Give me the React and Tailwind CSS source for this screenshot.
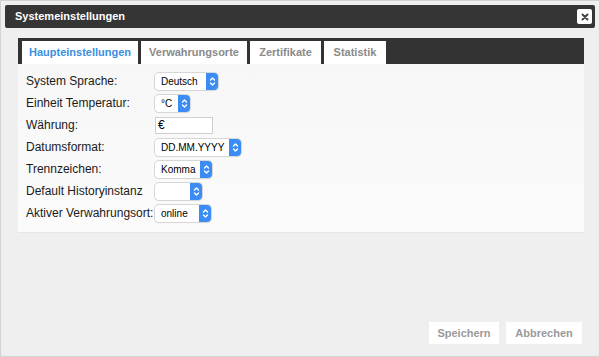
import React from 'react'

function Chevrons() {
  return (
    <svg width="7" height="11" viewBox="0 0 7 11" fill="none" stroke="white" strokeWidth="1.4" strokeLinecap="round" strokeLinejoin="round">
      <path d="M1.5 4 L3.5 2 L5.5 4" />
      <path d="M1.5 7 L3.5 9 L5.5 7" />
    </svg>
  )
}

function Select({ value, w }) {
  return (
    <div className={`flex h-[17px] items-stretch rounded-[4px] bg-white shadow-[0_0_0_1px_#d6d6d6,0_1px_1px_rgba(0,0,0,0.12)] ${w}`}>
      <span className="flex flex-1 items-center whitespace-nowrap pl-[6px] text-[10px] text-black">{value}</span>
      <span className="flex w-[12px] shrink-0 items-center justify-center rounded-r-[4px] bg-[#3b8cf5]">
        <Chevrons />
      </span>
    </div>
  )
}

const rows = [
  { label: 'System Sprache:', el: <Select value="Deutsch" w="w-[63px]" /> },
  { label: 'Einheit Temperatur:', el: <Select value="°C" w="w-[35px]" /> },
  {
    label: 'Währung:',
    el: (
      <div className="flex h-[17px] w-[58px] items-center border border-[#cfcfcf] bg-white pl-[2px] text-[12px] text-black">€</div>
    ),
  },
  { label: 'Datumsformat:', el: <Select value="DD.MM.YYYY" w="w-[86px]" /> },
  { label: 'Trennzeichen:', el: <Select value="Komma" w="w-[57px]" /> },
  { label: 'Default Historyinstanz', el: <Select value="" w="w-[47px]" /> },
  { label: 'Aktiver Verwahrungsort:', el: <Select value="online" w="w-[56px]" /> },
]

const tabs = [
  { name: 'Haupteinstellungen', w: 'w-[116px]', active: true },
  { name: 'Verwahrungsorte', w: 'w-[106px]' },
  { name: 'Zertifikate', w: 'w-[71px]' },
  { name: 'Statistik', w: 'w-[62px]' },
]

export default function App() {
  return (
    <div
      className="flex h-[357px] w-[600px] flex-col border border-[#d2d2d2] bg-[#efefef] p-[4px] text-[#111]"
      style={{ fontFamily: '"Liberation Sans", Arial, sans-serif' }}
    >
      {/* title bar */}
      <div className="flex h-[23px] items-center justify-between rounded-[2px] bg-[#353535] pl-[10px] pr-[3px]">
        <span className="text-[11px] font-bold text-white">Systemeinstellungen</span>
        <span className="flex h-[15px] w-[15px] items-center justify-center rounded-[2px] bg-white">
          <svg width="8" height="8" viewBox="0 0 8 8" stroke="#444" strokeWidth="2" strokeLinecap="round">
            <path d="M1.5 1.5 L6.5 6.5 M6.5 1.5 L1.5 6.5" />
          </svg>
        </span>
      </div>

      <div className="flex flex-1 flex-col pl-[13px] pr-[11px] pt-[10px]">
        {/* tabs */}
        <div className="flex h-[26px] items-end gap-[3px] bg-[#333] pl-[4px]">
          {tabs.map((t) => (
            <div
              key={t.name}
              className={`flex h-[23px] items-center justify-center bg-white text-[11px] font-bold ${t.w} ${t.active ? 'text-[#3a8ee0]' : 'text-[#8a8a8a]'}`}
            >
              {t.name}
            </div>
          ))}
        </div>

        {/* content */}
        <div className="flex h-[169px] flex-col border-b border-[#e6e6e6] bg-gradient-to-b from-[#f7f7f7] to-[#fbfbfb] pl-[8px] pt-[6px]">
          {rows.map((r) => (
            <div key={r.label} className="flex h-[22px] items-center">
              <span className="w-[129px] shrink-0 whitespace-nowrap text-[12px] text-[#1a1a1a]">{r.label}</span>
              {r.el}
            </div>
          ))}
        </div>

        <div className="flex-1" />

        {/* footer */}
        <div className="mb-[8px] flex justify-end gap-[7px] pr-[2px]">
          <button className="h-[22px] w-[70px] bg-white text-[11px] font-bold text-[#9a9a9a]">Speichern</button>
          <button className="h-[22px] w-[76px] bg-white text-[11px] font-bold text-[#9a9a9a]">Abbrechen</button>
        </div>
      </div>
    </div>
  )
}
